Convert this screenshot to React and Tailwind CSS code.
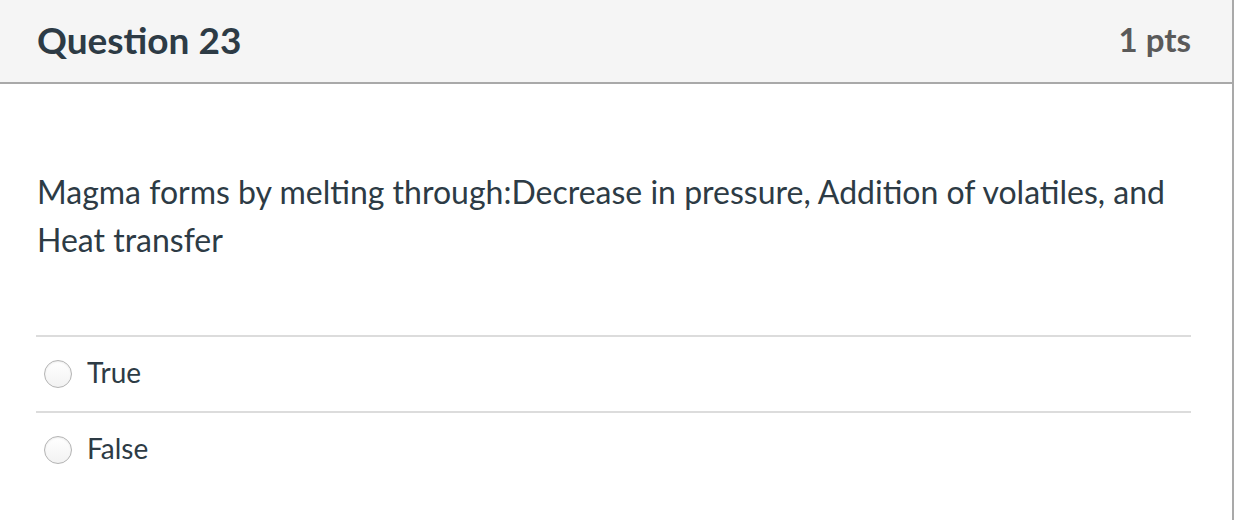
export default function App() {
  const answers = ["True", "False"];
  return (
    <div className="w-[1234px] h-[520px] bg-white font-['Lato','Noto_Sans',sans-serif] text-[#2d3b45] border-r-2 border-[#a9a9a9] overflow-hidden">
      <div className="h-[84px] bg-[#f5f5f5] border-b-2 border-[#a9a9a9] flex items-center justify-between pl-[37px] pr-[41px]">
        <h2 className="text-[37px] font-bold leading-none -mt-[4px]">Question 23</h2>
        <div className="text-[33px] font-bold leading-none text-[#5a5a5a] -mt-[3px]">1 pts</div>
      </div>
      <div className="pt-[84px] pl-[37px] pr-[40px] text-[32px] leading-[48px]">
        Magma forms by melting through:Decrease in pressure, Addition of volatiles, and Heat transfer
      </div>
      <div className="mt-[71px] ml-[36px] w-[1155px]">
        {answers.map((a) => (
          <div key={a} className="h-[76px] border-t-2 border-[#dcdcdc] flex items-center pl-[8px]">
            <span className="w-[28px] h-[28px] rounded-full border-[1.5px] border-[#b4b4b4] bg-[linear-gradient(#ffffff,#f2f2f2)] shadow-[inset_0_1px_2px_rgba(0,0,0,0.08)]" />
            <span className="ml-[15px] text-[28px] leading-none -mt-[4px]">{a}</span>
          </div>
        ))}
      </div>
    </div>
  );
}
